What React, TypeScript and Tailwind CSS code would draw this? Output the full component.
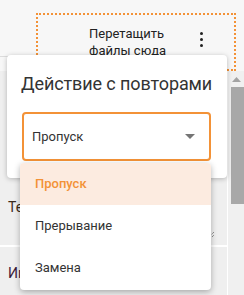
import React from "react";

const options = ["Пропуск", "Прерывание", "Замена"];

const KebabIcon: React.FC = () => (
  <div className="flex flex-col gap-[3px]">
    <span className="w-[3px] h-[3px] rounded-full bg-[#222]" />
    <span className="w-[3px] h-[3px] rounded-full bg-[#222]" />
    <span className="w-[3px] h-[3px] rounded-full bg-[#222]" />
  </div>
);

export default function App() {
  return (
    <div
      className="relative w-[244px] h-[295px] overflow-hidden bg-[#f7f7f7] text-[#333]"
      style={{ fontFamily: "Roboto, 'Liberation Sans', sans-serif" }}
    >
      {/* page behind the dialog */}
      <div className="flex h-[71px]">
        <div className="w-[36px] h-[57px] border-b border-[#dcdcdc]" />
        <div className="mt-[13px] w-[200px] h-[58px] border-2 border-dotted border-[#f39237] flex items-start pt-[10px] pl-[51px] pr-[31px]">
          <p className="text-[13px] leading-[17px] text-[#222] flex-1">
            Перетащить
            <br />
            файлы сюда
          </p>
          <div className="mt-[7px]">
            <KebabIcon />
          </div>
        </div>
      </div>

      <div className="flex h-[224px]">
        <div className="flex-1 flex flex-col bg-[#efefef] pt-[109px]">
          <div className="h-[65px] flex flex-col pl-[8px] pt-[18px] relative">
            <span className="text-[14px] leading-[18px] text-[#3a2a1a]">Тема</span>
            <svg className="absolute right-[12px] bottom-[7px]" width="7" height="7" viewBox="0 0 7 7">
              <path d="M1 6 L6 1 M4 6 L6 4" stroke="#666" strokeWidth="1" strokeDasharray="1 1" />
            </svg>
          </div>
          <div className="h-[2px] bg-white" />
          <div className="flex-1 pl-[8px] pt-[14px]">
            <span className="text-[14px] leading-[18px] text-[#3a1a3a]">Имя</span>
          </div>
        </div>
        <div className="w-[17px] border-l border-white bg-[#f0f0f0] flex flex-col items-center pt-[6px]">
          <svg width="9" height="5" viewBox="0 0 9 5">
            <path d="M4.5 0 L9 5 L0 5 Z" fill="#a3a3a3" />
          </svg>
          <div className="mt-[5px] ml-[2px] w-[13px] h-[117px] bg-[#a8a8a8]" />
        </div>
      </div>

      {/* dialog */}
      <div className="absolute left-[7px] top-[55px] w-[220px] h-[123px] bg-white rounded-[4px] shadow-[0_1px_5px_rgba(0,0,0,0.25)] px-[15px] pt-[17px]">
        <h2 className="text-[18px] leading-[24px] text-[#333] whitespace-nowrap -ml-[1px] tracking-[-0.1px]">
          Действие с повторами
        </h2>
        <div className="mt-[16px] mr-[1px] h-[49px] border-2 border-[#f39237] rounded-[4px] flex items-center pl-[8px] pr-[14px]">
          <span className="flex-1 text-[13px] text-[#333]">Пропуск</span>
          <svg width="10" height="5" viewBox="0 0 10 5">
            <path d="M0 0 L10 0 L5 5 Z" fill="#757575" />
          </svg>
        </div>
      </div>

      {/* open select menu */}
      <div className="absolute left-[20px] top-[163px] w-[191px] h-[127px] bg-white rounded-[4px] shadow-[0_2px_6px_rgba(0,0,0,0.3)] overflow-hidden">
        {options.map((o, i) => (
          <div
            key={o}
            className={`h-[42px] flex items-center pl-[15px] text-[13px] ${
              i === 0 ? "bg-[#fcebe0] text-[#f39237] font-medium" : "text-[#333]"
            }`}
          >
            {o}
          </div>
        ))}
      </div>
    </div>
  );
}
